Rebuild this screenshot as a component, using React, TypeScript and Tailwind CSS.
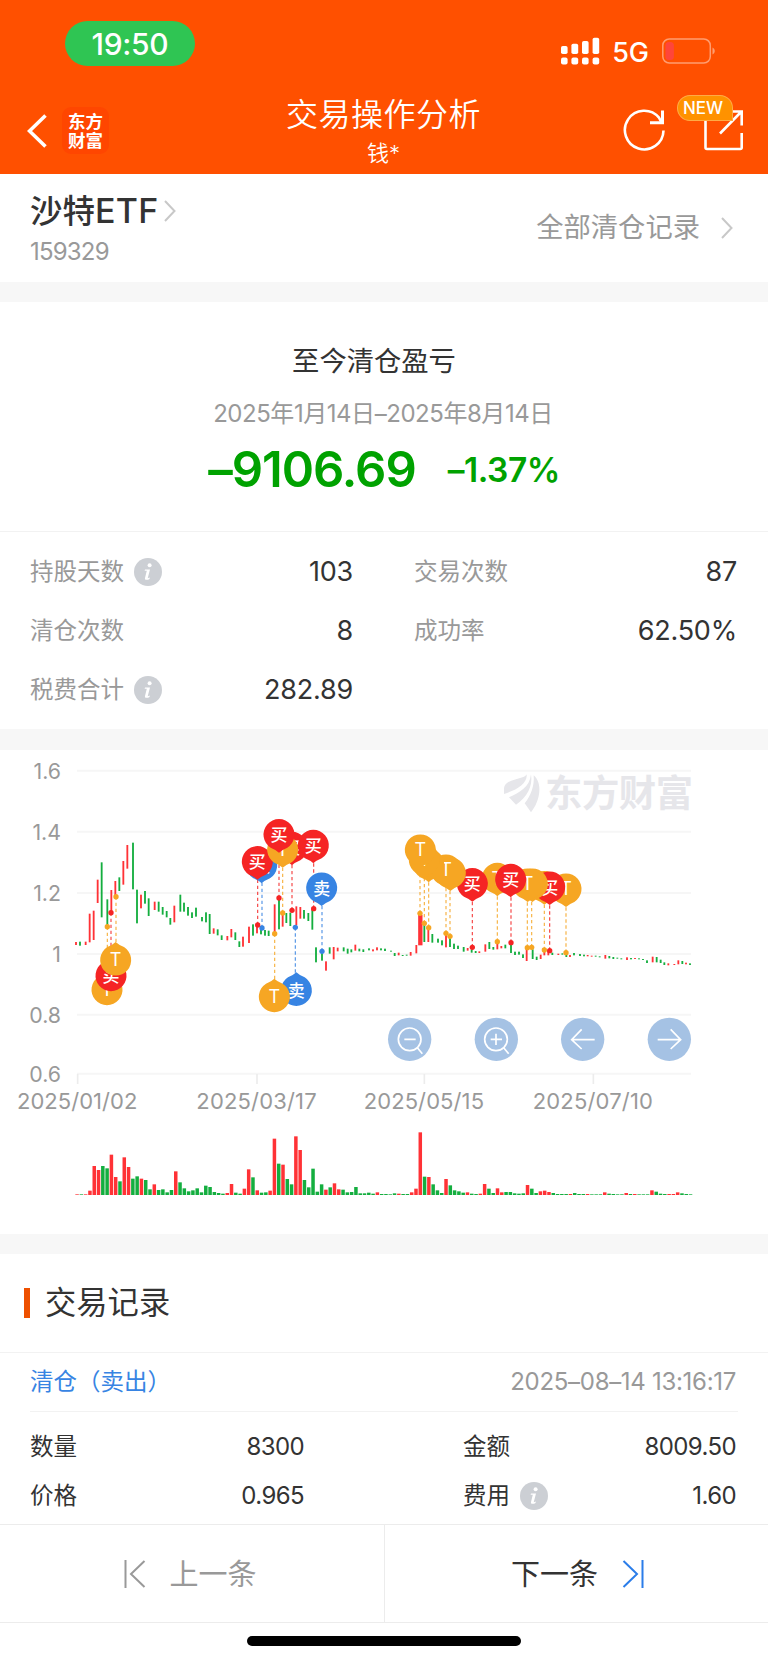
import { clsx } from 'clsx';

const RED = '#ff3236';
const GREEN = '#14ae3f';

// direction, x, high, low
const CANDLES = `
r228,576,585 g240,575,587 r257,575,585 r269,491,577 r281,482,570 r293,389,459 g305,337,502 g322,448,530
r334,420,488 r346,393,436 g358,382,423 r370,333,404 r382,285,356 g399,278,418 g411,419,520 r423,434,475
g435,423,461 g446,445,498 r464,455,480 g476,455,485 g488,471,494 g500,483,502 g511,504,524 r523,467,517
g541,434,485 g552,458,485 g564,471,497 g576,487,504 g588,473,500 g606,501,514 g618,487,517 g629,492,552
r641,535,551 g653,538,556 g665,556,570 r682,558,571 r694,537,562 g706,547,570 g718,574,591 r729,560,590
r747,530,579 g759,523,557 r771,525,550 g783,538,553 g795,540,557 g806,542,558 r824,463,550 g837,445,538
r848,490,530 g859,489,519 g871,488,528 r889,469,525 r901,471,506 g912,480,506 g925,489,513 g937,480,539
g948,592,637 g966,605,632 r978,634,662 g989,592,611 r1001,591,628 r1013,593,604 g1031,592,604 g1043,596,611
g1054,598,607 r1066,584,602 g1078,596,604 g1090,598,606 g1107,595,601 r1119,598,604 r1131,592,601 g1143,595,601
g1155,596,603 g1173,602,605 g1184,609,618 r1196,608,616 g1208,615,618 g1220,614,617 r1232,606,617 r1249,585,610
r1261,495,586 g1273,520,576 r1285,535,576 g1297,552,578 g1314,566,578 g1326,571,586 r1338,553,592 g1350,562,591
g1362,581,597 g1374,587,597 g1391,591,605 r1403,594,602 g1415,598,608 g1427,603,609 r1438,604,609 r1456,583,605
g1468,576,597 g1480,591,599 r1492,582,598 r1504,588,595 g1516,584,595 g1533,584,609 g1545,605,615 g1557,605,614
g1569,613,624 r1580,598,633 g1598,598,627 g1610,620,630 r1622,614,627 r1633,604,616 r1645,605,616 g1657,608,615
r1675,611,615 g1687,610,614 g1699,612,621 r1710,615,621 g1722,609,616 g1740,612,618 g1752,614,619 r1763,615,619
r1775,617,620 g1787,617,620 g1799,619,622 r1816,615,626 g1828,618,625 g1840,621,627 g1852,623,626 g1864,625,628
r1881,622,630 g1893,624,628 r1905,624,627 g1917,625,628 g1929,627,630 g1941,631,639 r1958,620,637 g1970,621,637
g1982,629,639 g1993,637,645 r2005,640,646 r2023,642,645 r2035,631,643 g2047,633,642 r2058,638,643 g2070,640,645
`
  .trim()
  .split(/\s+/)
  .map((item) => {
    const [x, high, low] = item.slice(1).split(',').map(Number);
    return { up: item[0] === 'r', x, high, low };
  });

const VOLUMES = `
r2 g2 r2 r13 r87 r75 g87 g80 r121 r54 g41 r113 r84 g49 g56 r49 g45 g17 r32 g15 g17 g8 g15 r71 g38 g20 g11 g14 g20 g8
g28 g24 g9 g6 g4 r6 r33 g7 g4 r19 r77 g53 r14 g7 g8 r13 r169 g94 r91 g48 g32 r176 r135 g45 g23 g79 g10 g32 r16 g23
r35 r17 g16 g8 g9 g24 g5 g5 g7 g4 r8 g3 g3 g2 g5 r4 g3 g3 r8 r19 r188 g55 r54 g32 g14 g6 r48 g29 g14 g11
g7 r8 g4 g3 r4 r33 g19 g6 r20 r8 g9 g9 g5 g4 g5 r30 g19 g6 r11 r13 r9 g6 g3 g3 g3 r3 g6 g3 g3 r3
g2 g2 g2 r8 g4 g3 g2 g2 r6 g3 r3 g2 g2 g2 r14 g10 g4 g3 r3 r3 r8 g5 g3 g2
`
  .trim()
  .split(/\s+/)
  .map((item) => ({ up: item[0] === 'r', height: Number(item.slice(1)) }));

type PinKind = '买' | '卖' | 'T';

const PIN_COLORS: Record<PinKind, string> = {
  买: '#f52424',
  卖: '#3784e3',
  T: '#f6a623',
};

// kind, pin x, pin y, dot x, dot y (painted in this order)
const PINS: [PinKind, number, number, number, number][] = [
  ['T', 321, 719, 322, 530],
  ['买', 333, 677, 333, 488],
  ['T', 347, 630, 348, 440],
  ['卖', 785, 346, 786, 534],
  ['买', 772, 335, 773, 525],
  ['买', 876, 292, 876, 481],
  ['T', 848, 299, 848, 489],
  ['买', 837, 254, 837, 444],
  ['买', 940, 286, 941, 476],
  ['卖', 965, 414, 966, 604],
  ['卖', 889, 721, 886, 532],
  ['T', 823, 740, 824, 551],
  ['T', 1698, 417, 1698, 608],
  ['T', 1633, 410, 1633, 600],
  ['买', 1649, 411, 1649, 602],
  ['T', 1597, 402, 1595, 592],
  ['T', 1583, 402, 1582, 593],
  ['T', 1492, 385, 1492, 575],
  ['买', 1532, 388, 1533, 578],
  ['买', 1417, 401, 1417, 592],
  ['T', 1351, 369, 1350, 559],
  ['T', 1338, 360, 1338, 550],
  ['T', 1286, 343, 1286, 533],
  ['T', 1273, 330, 1273, 520],
  ['T', 1261, 300, 1260, 490],
];

const GRID = [
  { y: 62, label: '1.6' },
  { y: 245, label: '1.4' },
  { y: 429, label: '1.2' },
  { y: 612, label: '1' },
  { y: 794, label: '0.8' },
  { y: 971, label: '0.6' },
];

const TICKS = [
  { x: 233, label: '2025/01/02' },
  { x: 771, label: '2025/03/17' },
  { x: 1273, label: '2025/05/15' },
  { x: 1780, label: '2025/07/10' },
];

const Pin = ({ kind, x, y, up }: { kind: PinKind; x: number; y: number; up: boolean }) => (
  <g transform={`translate(${x} ${y})`}>
    <path
      d="M0 54 Q-8 46 -25 39 A46.5 46.5 0 1 1 25 39 Q8 46 0 54 Z"
      fill={PIN_COLORS[kind]}
      transform={up ? 'rotate(180)' : undefined}
    />
    <text y={kind === 'T' ? 19 : 20} textAnchor="middle" fill="#fff" fontSize={kind === 'T' ? 54 : 51} fontWeight={kind === 'T' ? 400 : 500}>
      {kind}
    </text>
  </g>
);

const TradeChart = () => (
  <svg viewBox="0 0 2304 1452" className="block h-[484px] w-[768px]">
    {GRID.map(({ y, label }) => (
      <g key={label}>
        <line x1="231" x2="2073" y1={y} y2={y} stroke="#f6f6f6" strokeWidth="6" />
        <text x="183" y={y + 25} textAnchor="end" fontSize="64" fill="#999">
          {label}
        </text>
      </g>
    ))}
    {TICKS.map(({ x, label }) => (
      <g key={label}>
        <line x1={x} x2={x} y1="972" y2="1002" stroke="#ececec" strokeWidth="5" />
        <text x={x - 182} y="1078" textLength="361" fontSize="66" fill="#999">
          {label}
        </text>
      </g>
    ))}

    {/* watermark */}
    <g fill="#e6e6ea">
      <path d="M1512 116 C1514 90 1545 91 1570 81 C1575 79 1578 77 1580 73 C1583 100 1550 120 1512 132 Z" />
      <path d="M1593 73 C1589 112 1559 128 1527 142 L1548 164 C1581 142 1599 110 1593 73 Z" />
      <path d="M1601 76 C1628 98 1622 152 1593 187 L1574 160 C1592 138 1604 108 1601 76 Z" />
      <text x="1635" y="171" fontSize="112" fontWeight="700" textLength="444">
        东方财富
      </text>
    </g>

    {CANDLES.map(({ up, x, high, low }) => {
      const width = high === 495 ? 13 : 5.5;
      return (
        <rect key={x} x={x - width / 2} y={high} width={width} height={low - high} fill={up ? RED : GREEN} />
      );
    })}

    {PINS.map(([kind, x, y, dotX, dotY]) => (
      <g key={`${kind}-${dotX}`} stroke={PIN_COLORS[kind]} fill={PIN_COLORS[kind]}>
        <line x1={dotX} x2={dotX} y1={dotY} y2={y} strokeWidth="3.5" strokeDasharray="10 8" opacity="0.85" />
        <circle cx={dotX} cy={dotY} r="8" stroke="none" />
      </g>
    ))}
    {PINS.map(([kind, x, y, dotX, dotY]) => (
      <Pin key={`${kind}-${dotX}`} kind={kind} x={x} y={y} up={dotY < y && y > 600} />
    ))}

    {/* zoom and pan controls */}
    {[1229, 1489, 1748, 2008].map((x) => (
      <circle key={x} cx={x} cy="868" r="65" fill="#a5c2e4" />
    ))}
    <g fill="none" stroke="#fff" strokeWidth="5">
      <circle cx="1229" cy="868" r="34" />
      <path d="M1213 868h34M1252 893l15 18" />
      <circle cx="1488" cy="868" r="34" />
      <path d="M1472 868h34M1488 851v34M1511 893l15 18" />
      <path d="M1784 869h-69M1745 838l-30 31 30 28" />
      <path d="M1973 869h69M2012 838l30 31 -30 28" />
    </g>

    {VOLUMES.map(({ up, height }, i) => (
      <rect key={i} x={226 + i * 12.87} y={1335 - height} width="10.5" height={height} fill={up ? RED : GREEN} />
    ))}
  </svg>
);

const InfoIcon = () => (
  <svg viewBox="0 0 28 28" className="ml-2.5 size-7">
    <circle cx="14" cy="14" r="14" fill="#cccfd4" />
    <circle cx="15.6" cy="7.2" r="2" fill="#fff" />
    <path d="M11 11.4h5l-2.3 8.8 2.2-.7-.4 1.4c-1.7 1.2-5.200 1.600-4.500-1l1.800-7.100h-2.200z" fill="#fff" />
  </svg>
);

const Chevron = ({ className }: { className?: string }) => (
  <svg viewBox="0 0 12 22" className={clsx('h-[22px] w-3', className)} fill="none" stroke="#c8c8c8" strokeWidth="2">
    <path d="M1 1l9.5 10L1 21" />
  </svg>
);

interface StatProps {
  label: string;
  value: string;
  info?: boolean;
}

const Stat = ({ label, value, info }: StatProps) => (
  <div className="flex h-[59px] items-center justify-between">
    <span className="flex items-center text-[23.5px] text-[#999]">
      <span className="pt-px">{label}</span>
      {info && <InfoIcon />}
    </span>
    <span className="pt-0.5 text-[27px] tracking-[-0.2px] text-[#333]">{value}</span>
  </div>
);

const RecordItem = ({ label, value, info }: StatProps) => (
  <div className="flex h-[49px] items-center justify-between text-[#333]">
    <span className="flex items-center text-[23.5px]">
      {label}
      {info && <InfoIcon />}
    </span>
    <span className="text-[24px] tracking-[-0.6px]">{value}</span>
  </div>
);

const StatusBar = () => (
  <div className="flex h-[86px] justify-between pt-[21px] pr-[52px] pl-[65px]">
    <div className="flex h-[45px] w-[130px] items-center justify-center rounded-full bg-[#2fc553] pt-px text-[30px] font-medium tracking-[-0.3px]">
      19:50
    </div>
    <div className="flex h-[60px] items-center">
      <svg viewBox="0 0 39 28" className="h-7 w-[39px]" fill="#fff">
        <rect x="0" y="9" width="6.6" height="8" rx="1.8" />
        <rect x="10.4" y="6.7" width="6.8" height="10.3" rx="1.8" />
        <rect x="21" y="4" width="6.6" height="13" rx="1.8" />
        <rect x="31.6" y="0.8" width="6.6" height="16.2" rx="1.8" />
        <rect x="0" y="20.5" width="6.6" height="7" rx="2" />
        <rect x="10.4" y="20.5" width="6.8" height="7" rx="2" />
        <rect x="21" y="20.5" width="6.6" height="7" rx="2" />
        <rect x="31.6" y="20.5" width="6.6" height="7" rx="2" />
      </svg>
      <span className="ml-3 pt-0.5 text-[27px] leading-none font-medium">5G</span>
      <svg viewBox="0 0 54 26" className="ml-[13px] h-[26px] w-[54px]" fill="none">
        <rect x="0.8" y="1" width="47.5" height="24" rx="6.5" stroke="#ff9d70" strokeWidth="1.5" />
        <rect x="3.4" y="4" width="8.5" height="18" rx="3.5" fill="#ff453a" />
        <path d="M50.5 9.5c3 1.5 3 5.5 0 7z" fill="#ff9d70" />
      </svg>
    </div>
  </div>
);

const NavBar = () => (
  <div className="flex h-[87.5px] items-start justify-between pr-[23px] pl-[27px]">
    <div className="flex w-[220px] items-center pt-[21px]">
      <svg viewBox="0 0 20 34" className="h-[34px] w-5" fill="none" stroke="#fff" strokeWidth="3.6">
        <path d="M18.5 1.5L2.5 17l16 15.5" />
      </svg>
      <div className="ml-[15px] flex size-[47px] flex-col items-center justify-center rounded-[9px] bg-[#ff4600] text-[17.5px] leading-[19px] font-bold">
        <span>东方</span>
        <span>财富</span>
      </div>
    </div>
    <div className="flex flex-col items-center pt-[9px]">
      <h1 className="text-[32px] leading-10 font-[350] tracking-[0.5px]">交易操作分析</h1>
      <p className="text-[22px] leading-[37px] font-[350]">钱*</p>
    </div>
    <div className="flex w-[225px] justify-end gap-[38px] pt-[23px]">
      <svg viewBox="0 0 42 42" className="size-[42px]" fill="none" stroke="#fff" strokeWidth="2.6">
        <path d="M40.5 21.5A19.3 19.3 0 1 1 36 8.7L38.5 13.3" />
        <path d="M39.5 1.5v12.3H27" strokeWidth="3" />
      </svg>
      <div className="relative">
        <svg viewBox="0 0 42 42" className="size-[42px]" fill="none" stroke="#fff" strokeWidth="2.6">
          <path d="M25 2.5h13.7v14M38 3L17 24.5M2.5 6v32.5a1.5 1.5 0 0 0 1.5 1.5h33.2a1.5 1.5 0 0 0 1.5-1.5V24" />
        </svg>
        <span className="absolute -top-[14px] -left-[26px] flex h-[26px] w-[56px] items-center justify-center rounded-full rounded-br-md border border-[#ffab45] bg-[#ff9200] pt-0.5 pr-1 text-[17px] font-medium">
          NEW
        </span>
      </div>
    </div>
  </div>
);

const App = () => {
  return (
    <div className="flex h-[1663px] w-[768px] flex-col bg-white font-[Inter,'Noto_Sans_CJK_SC',sans-serif] whitespace-nowrap">
      <header className="bg-[#ff5000] text-white">
        <StatusBar />
        <NavBar />
      </header>

      <section className="flex h-[108.5px] justify-between pr-[35px] pl-[30px]">
        <div className="pt-[15px]">
          <div className="flex items-center">
            <h2 className="text-[32.5px] leading-[44px] font-medium text-[#333]">
              沙特<span className="text-[34px] tracking-[0.3px]">ETF</span>
            </h2>
            <Chevron className="ml-[5px]" />
          </div>
          <p className="text-[24px] leading-9 tracking-[-0.8px] text-[#999]">159329</p>
        </div>
        <div className="flex items-center text-[27.3px] text-[#999]">
          <span className="pt-0.5">全部清仓记录</span>
          <Chevron className="ml-[21px]" />
        </div>
      </section>

      <div className="h-5 bg-[#f7f7f7]" />

      <section className="flex h-[230px] flex-col items-center border-b border-[#f2f2f2] pt-[39px]">
        <h3 className="pr-[20px] text-[27.3px] leading-[42px] text-[#333]">至今清仓盈亏</h3>
        <p className="mt-3 pr-0.5 text-[24px] leading-[38px] tracking-[-0.45px] text-[#999]">
          2025年1月14日–2025年8月14日
        </p>
        <div className="mt-[7px] flex items-center gap-8 font-semibold text-[#00a200]">
          <span className="text-[49px] leading-[60px] tracking-[-1px]">–9106.69</span>
          <span className="text-[33.5px] leading-[60px] tracking-[-0.5px]">–1.37%</span>
        </div>
      </section>

      <section className="grid h-[197px] grid-cols-2 content-start gap-x-[61px] pt-[10px] pr-[31px] pl-[30px]">
        <Stat label="持股天数" value="103" info />
        <Stat label="交易次数" value="87" />
        <Stat label="清仓次数" value="8" />
        <Stat label="成功率" value="62.50%" />
        <Stat label="税费合计" value="282.89" info />
      </section>

      <div className="h-[21px] bg-[#f7f7f7]" />

      <section className="h-[484px]">
        <TradeChart />
      </section>

      <div className="h-5 bg-[#f7f7f7]" />

      <section className="flex flex-col">
        <div className="flex h-[99px] items-center border-b border-[#f2f2f2] pl-6">
          <span className="h-[30px] w-1.5 bg-[#ee5000]" />
          <h3 className="ml-[15px] pt-px text-[31.3px] text-[#333]">交易记录</h3>
        </div>
        <div className="mx-[30px] flex h-[59px] items-center justify-between border-b border-[#f2f2f2] pr-0.5">
          <span className="text-[23.5px] text-[#3784e3]">清仓（卖出）</span>
          <span className="text-[24px] tracking-[-0.3px] text-[#999]">2025–08–14 13:16:17</span>
        </div>
        <div className="grid h-[112px] grid-cols-[274px_273px] content-start justify-between pt-[10px] pr-8 pl-[30px]">
          <RecordItem label="数量" value="8300" />
          <RecordItem label="金额" value="8009.50" />
          <RecordItem label="价格" value="0.965" />
          <RecordItem label="费用" value="1.60" info />
        </div>
      </section>

      <nav className="grid h-[99px] grid-cols-2 border-y border-[#ececec] text-[29px]">
        <button className="flex items-center justify-center gap-[23px] pr-[3px] text-[#999]">
          <svg viewBox="0 0 22 30" className="h-[30px] w-[22px]" fill="none" stroke="#999" strokeWidth="2">
            <path d="M1.5 1v28M20.5 2L7 15l13.5 13" />
          </svg>
          <span className="pt-0.5">上一条</span>
        </button>
        <button className="flex items-center justify-center gap-6 border-l border-[#ececec] pl-0.5 text-[#333]">
          <span className="pt-0.5">下一条</span>
          <svg viewBox="0 0 22 30" className="h-[30px] w-[22px]" fill="none" stroke="#2b7de9" strokeWidth="2">
            <path d="M20.5 1v28M1.5 2L15 15 1.5 28" />
          </svg>
        </button>
      </nav>

      <div className="flex justify-center pt-[13px]">
        <div className="h-2.5 w-[274px] rounded-full bg-black" />
      </div>
    </div>
  );
};

export default App;
